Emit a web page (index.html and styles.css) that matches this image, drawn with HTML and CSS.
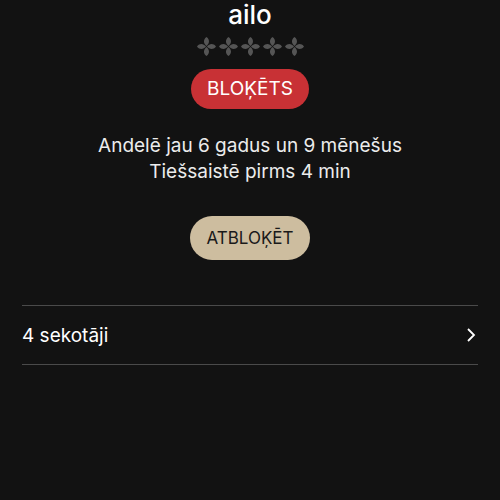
FILE: index.html
```html
<!DOCTYPE html>
<html lang="lv">
<head>
  <meta charset="UTF-8" />
  <title>ailo</title>
  <meta name="viewport" content="width=device-width, initial-scale=1.0" />
  <link rel="stylesheet" href="styles.css">
</head>
<body>
  <main class="profile">
    <h1 class="name">ailo</h1>

    <div class="stars">
      <svg viewBox="0 0 20 20"><path d="M10 0 C14 3 13 7 10 9.5 C7 7 6 3 10 0Z M10 20 C6 17 7 13 10 10.5 C13 13 14 17 10 20Z M0 10 C3 6 7 7 9.5 10 C7 13 3 14 0 10Z M20 10 C17 14 13 13 10.5 10 C13 7 17 6 20 10Z"/></svg>
      <svg viewBox="0 0 20 20"><path d="M10 0 C14 3 13 7 10 9.5 C7 7 6 3 10 0Z M10 20 C6 17 7 13 10 10.5 C13 13 14 17 10 20Z M0 10 C3 6 7 7 9.5 10 C7 13 3 14 0 10Z M20 10 C17 14 13 13 10.5 10 C13 7 17 6 20 10Z"/></svg>
      <svg viewBox="0 0 20 20"><path d="M10 0 C14 3 13 7 10 9.5 C7 7 6 3 10 0Z M10 20 C6 17 7 13 10 10.5 C13 13 14 17 10 20Z M0 10 C3 6 7 7 9.5 10 C7 13 3 14 0 10Z M20 10 C17 14 13 13 10.5 10 C13 7 17 6 20 10Z"/></svg>
      <svg viewBox="0 0 20 20"><path d="M10 0 C14 3 13 7 10 9.5 C7 7 6 3 10 0Z M10 20 C6 17 7 13 10 10.5 C13 13 14 17 10 20Z M0 10 C3 6 7 7 9.5 10 C7 13 3 14 0 10Z M20 10 C17 14 13 13 10.5 10 C13 7 17 6 20 10Z"/></svg>
      <svg viewBox="0 0 20 20"><path d="M10 0 C14 3 13 7 10 9.5 C7 7 6 3 10 0Z M10 20 C6 17 7 13 10 10.5 C13 13 14 17 10 20Z M0 10 C3 6 7 7 9.5 10 C7 13 3 14 0 10Z M20 10 C17 14 13 13 10.5 10 C13 7 17 6 20 10Z"/></svg>
    </div>

    <span class="badge">BLOĶĒTS</span>

    <p class="info">Andelē jau 6 gadus un 9 mēnešus<br>Tiešsaistē pirms 4 min</p>

    <button type="button" class="unblock">ATBLOĶĒT</button>

    <a class="row" href="#">
      <span>4 sekotāji</span>
      <svg class="chevron" viewBox="0 0 10 16"><path d="M2 2 L8 8 L2 14" /></svg>
    </a>
  </main>
</body>
</html>
```

FILE: styles.css
```css
body {
  margin: 0;
  background-color: #121212;
  color: #fff;
  font-family: Inter, "Noto Sans", sans-serif;
}
.profile {
  display: flex;
  flex-direction: column;
  align-items: center;
  padding: 0 22px;
}
.name {
  margin: 0;
  font-size: 26px;
  font-weight: 500;
  line-height: 30px;
}
.stars {
  display: flex;
  gap: 3px;
  margin-top: 7px;
}
.stars svg {
  width: 19px;
  height: 19px;
  fill: #555;
}
.badge {
  margin-top: 13px;
  padding: 0 16px;
  height: 40px;
  line-height: 40px;
  border-radius: 20px;
  background: #c83135;
  font-size: 19px;
}
.info {
  margin: 24px 0 0;
  text-align: center;
  font-size: 19px;
  line-height: 26px;
  color: #ececec;
}
.unblock {
  margin-top: 31px;
  height: 44px;
  padding: 0 16px;
  border: none;
  border-radius: 22px;
  background: #cdbd9f;
  color: #1a1a1a;
  font-family: inherit;
  font-size: 17px;
}
.row {
  align-self: stretch;
  display: flex;
  justify-content: space-between;
  align-items: center;
  margin-top: 45px;
  height: 58px;
  border-top: 1px solid #4a4a4a;
  border-bottom: 1px solid #4a4a4a;
  color: #fff;
  text-decoration: none;
  font-size: 19px;
}
.chevron {
  width: 10px;
  height: 16px;
  margin-right: 2px;
  fill: none;
  stroke: #fff;
  stroke-width: 1.8;
}
```
